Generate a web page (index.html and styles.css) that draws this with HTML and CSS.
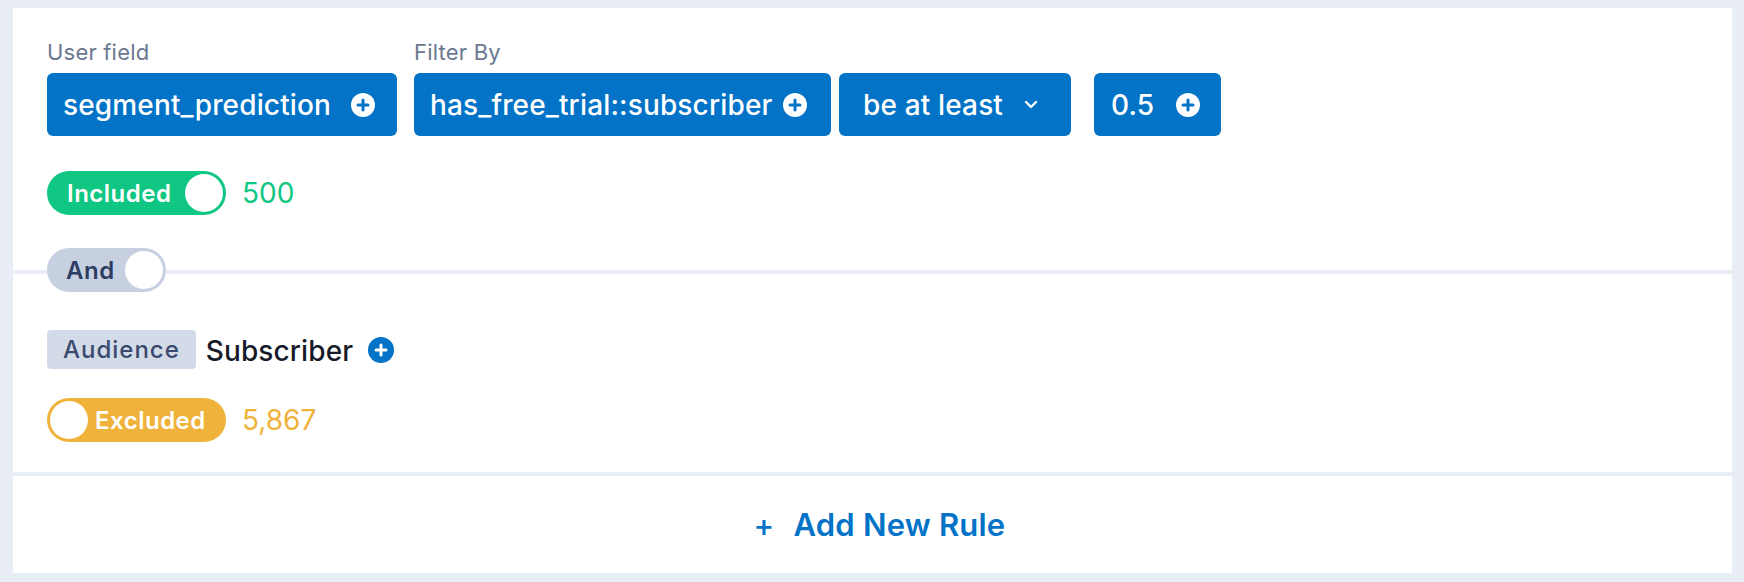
FILE: index.html
```html
<!DOCTYPE html>
<html>
<head>
<meta charset="utf-8">
<link rel="stylesheet" href="styles.css">
</head>
<body>
<div class="panel">
  <section class="block block-top">
    <div class="fields">
      <div class="field">
        <div class="label">User field</div>
        <div class="btn btn-user">segment_prediction <span class="plus"><svg viewBox="0 0 24 24" width="24" height="24"><circle cx="12" cy="12" r="12" fill="#fff"/><path d="M12 7v10M7 12h10" stroke="#0273c7" stroke-width="3" stroke-linecap="round"/></svg></span></div>
      </div>
      <div class="field">
        <div class="label">Filter By</div>
        <div class="btn-row">
          <div class="btn btn-filter">has_free_trial::subscriber <span class="plus"><svg viewBox="0 0 24 24" width="24" height="24"><circle cx="12" cy="12" r="12" fill="#fff"/><path d="M12 7v10M7 12h10" stroke="#0273c7" stroke-width="3" stroke-linecap="round"/></svg></span></div>
          <div class="btn btn-op">be at least <span class="chev"><svg viewBox="0 0 14 9" width="14" height="9"><path d="M2 2l5 5 5-5" fill="none" stroke="#fff" stroke-width="2.4" stroke-linecap="round" stroke-linejoin="round"/></svg></span></div>
          <div class="btn btn-val">0.5 <span class="plus"><svg viewBox="0 0 24 24" width="24" height="24"><circle cx="12" cy="12" r="12" fill="#fff"/><path d="M12 7v10M7 12h10" stroke="#0273c7" stroke-width="3" stroke-linecap="round"/></svg></span></div>
        </div>
      </div>
    </div>
    <div class="status">
      <div class="toggle toggle-in"><span class="toggle-text">Included</span><span class="knob"></span></div>
      <span class="count count-in">500</span>
    </div>
    <div class="toggle toggle-and"><span class="toggle-text">And</span><span class="knob"></span></div>
  </section>
  <section class="block block-mid">
    <div class="audience">
      <span class="tag">Audience</span>
      <span class="aud-name">Subscriber</span>
      <span class="plus-blue"><svg viewBox="0 0 26 26" width="26" height="26"><circle cx="13" cy="13" r="13" fill="#0273c7"/><path d="M13 8v10M8 13h10" stroke="#fff" stroke-width="3" stroke-linecap="round"/></svg></span>
    </div>
    <div class="status">
      <div class="toggle toggle-ex"><span class="knob"></span><span class="toggle-text">Excluded</span></div>
      <span class="count count-ex">5,867</span>
    </div>
  </section>
  <section class="block block-add">
    <div class="add"><span class="add-plus">+</span><span>Add New Rule</span></div>
  </section>
</div>
</body>
</html>
```
FILE: styles.css
```css
* { box-sizing: border-box; }
html, body { margin: 0; padding: 0; }
body {
  background: #e9edf5;
  font-family: Inter, "Noto Sans", "Liberation Sans", sans-serif;
  width: 1744px;
  height: 582px;
  overflow: hidden;
}
.panel {
  padding: 8px 12px 10px 13px;
  display: flex;
  flex-direction: column;
  gap: 4px;
}
.block {
  background: #fff;
  padding-left: 34px;
}
.block-top {
  height: 262px;
  padding-top: 31px;
  display: flex;
  flex-direction: column;
  align-items: flex-start;
}
.fields {
  display: flex;
  gap: 17px;
}
.field {
  display: flex;
  flex-direction: column;
}
.label {
  font-size: 22px;
  line-height: 26px;
  color: #6b7890;
  height: 34px;
  letter-spacing: 0.2px;
}
.btn-row {
  display: flex;
  gap: 8px;
}
.btn {
  height: 63px;
  background: #0273c7;
  color: #fff;
  border-radius: 6px;
  display: flex;
  align-items: center;
  font-size: 28px;
  font-weight: 500;
  letter-spacing: 0.15px;
  white-space: pre;
}
.btn-user { width: 350px; padding-left: 16px; }
.btn-filter { width: 417px; padding-left: 16px; }
.btn-op { width: 232px; padding-left: 24px; margin-right: 15px; }
.btn-val { width: 127px; padding-left: 17px; }
.plus { display: flex; margin-left: auto; margin-right: 22px; }
.btn-filter .plus { margin-right: 24px; }
.chev { display: flex; margin-left: auto; margin-right: 33px; }
.btn-val .plus { margin-right: 21px; }

.status {
  display: flex;
  align-items: center;
  gap: 16px;
}
.block-top .status { margin-top: 35px; }
.toggle {
  height: 44px;
  border-radius: 22px;
  display: flex;
  align-items: center;
  padding: 3px;
  font-size: 24px;
  font-weight: 600;
  letter-spacing: 0.5px;
  color: #fff;
}
.knob {
  width: 38px;
  height: 38px;
  border-radius: 50%;
  background: #fff;
}
.toggle-text { flex: 1; text-align: left; }
.toggle-in { width: 179px; background: #0fc682; padding-left: 20px; }
.count { font-size: 28px; }
.count-in { color: #0fc682; }
.toggle-and {
  width: 119px;
  margin-top: 33px;
  background: #c6d0e1;
  color: #2e3d62;
  padding-left: 19px;
  position: relative;
  z-index: 1;
}

.block-mid {
  height: 198px;
  padding-top: 56px;
}
.audience {
  display: flex;
  align-items: center;
  height: 39px;
}
.tag {
  background: #d4dbe8;
  color: #3a4a6e;
  height: 39px;
  border-radius: 4px;
  padding: 0 16px;
  display: flex;
  align-items: center;
  font-size: 24px;
  font-weight: 500;
  letter-spacing: 1px;
}
.aud-name {
  margin-left: 10px;
  font-size: 28px;
  font-weight: 500;
  letter-spacing: 0.1px;
  color: #171b29;
  margin-top: 3px;
}
.plus-blue { display: flex; margin-left: 15px; }
.block-mid .status { margin-top: 29px; }
.toggle-ex { width: 179px; background: #efb23a; }
.toggle-ex .toggle-text { padding-left: 7px; }
.count-ex { color: #efb23a; }

.block-add {
  height: 97px;
  display: flex;
  align-items: center;
  justify-content: center;
  padding-left: 0;
}
.add {
  color: #0273c7;
  font-size: 31px;
  font-weight: 600;
  letter-spacing: 0.2px;
  display: flex;
  align-items: center;
  gap: 19px;
  margin-left: 14px;
}
.add-plus { font-weight: 500; }
```
